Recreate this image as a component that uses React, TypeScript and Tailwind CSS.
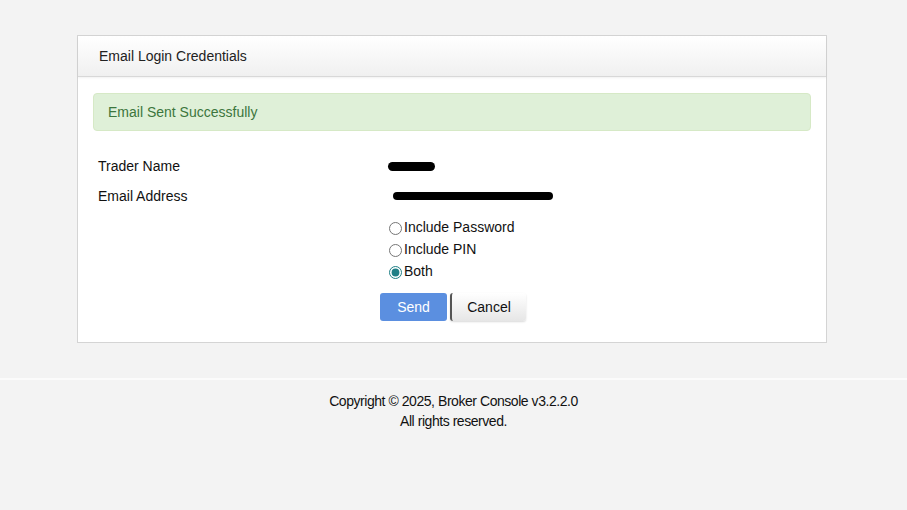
import React, { useState } from 'react';

export default function App() {
  const [mode, setMode] = useState('both');

  const options = [
    { id: 'password', label: 'Include Password' },
    { id: 'pin', label: 'Include PIN' },
    { id: 'both', label: 'Both' },
  ];

  return (
    <div className="min-h-[510px] bg-[#f3f3f3] text-[14px] text-[#111] font-['Liberation_Sans',Arial,sans-serif]">
      <div className="pt-[35px] pl-[77px]">
        <div className="w-[750px] h-[308px] border border-[#d4d4d4] bg-white">
          <div className="h-[41px] flex items-center px-[21px] text-[14px] text-[#222] bg-gradient-to-b from-white to-[#f0f0f0] border-b border-[#d8d8d8] shadow-[0_1px_2px_rgba(0,0,0,0.06)]">
            Email Login Credentials
          </div>

          <div className="px-[15px] pt-[16px]">
            <div className="h-[38px] flex items-center px-[14px] bg-[#dff0d8] border border-[#d6e9c6] rounded-[4px] text-[#3c763d]">
              Email Sent Successfully
            </div>
          </div>

          <div className="grid grid-cols-[290px_1fr] pl-[20px] pt-[20px]">
            <div className="h-[30px] flex items-center">Trader Name</div>
            <div className="h-[30px] flex items-center">
              <span className="inline-block w-[47px] h-[9px] rounded-full bg-black" />
            </div>
            <div className="h-[30px] flex items-center">Email Address</div>
            <div className="h-[30px] flex items-center">
              <span className="inline-block w-[160px] h-[8px] ml-[5px] rounded-full bg-black" />
            </div>
          </div>

          <div className="pl-[310px] pt-[5px] flex flex-col">
            {options.map((o) => (
              <label key={o.id} className="h-[22px] flex items-center cursor-pointer">
                <input
                  type="radio"
                  name="mode"
                  checked={mode === o.id}
                  onChange={() => setMode(o.id)}
                  className="w-[13px] h-[13px] m-0 mt-[3px] mr-[2px] ml-[1px] accent-[#1f7f86]"
                />
                <span>{o.label}</span>
              </label>
            ))}
          </div>

          <div className="pl-[302px] pt-[11px] flex items-center gap-[3px]">
            <button className="w-[67px] h-[28px] rounded-[3px] bg-[#5b8fe0] text-white text-[14px]">
              Send
            </button>
            <button className="w-[76px] h-[28px] rounded-[3px] border-l-2 border-[#555] bg-gradient-to-b from-white to-[#e6e6e6] shadow-[0_1px_2px_rgba(0,0,0,0.15)] text-[#111] text-[14px]">
              Cancel
            </button>
          </div>
        </div>
      </div>

      <div className="mt-[35px] border-t-2 border-[#fbfbfb] pt-[11px] text-center text-[14px] leading-[20px] tracking-[-0.45px] text-[#111]">
        <div>Copyright © 2025, Broker Console v3.2.2.0</div>
        <div>All rights reserved.</div>
      </div>
    </div>
  );
}
